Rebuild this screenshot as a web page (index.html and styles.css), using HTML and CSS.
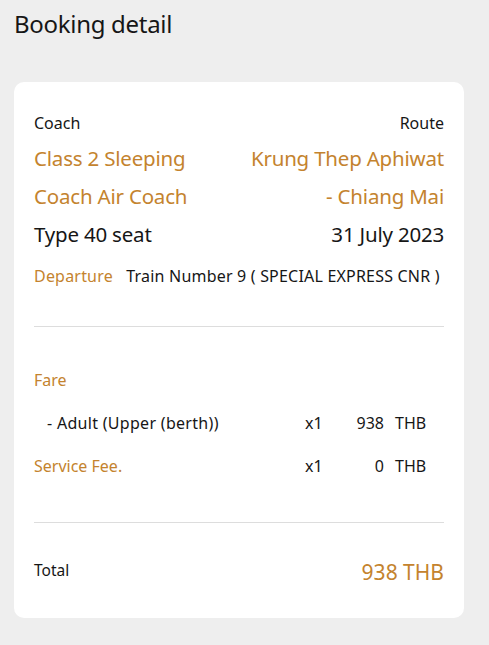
FILE: index.html
```html
<!DOCTYPE html>
<html lang="en">
<head>
    <meta charset="UTF-8">
    <meta name="viewport" content="width=device-width, initial-scale=1.0">
    <title>Booking detail</title>
    <link rel="stylesheet" href="styles.css">
</head>
<body>
    <h1 class="page-title">Booking detail</h1>

    <div class="card">
        <!-- Coach / Route -->
        <div class="trip">
            <div class="trip-col">
                <div class="label">Coach</div>
                <div class="big orange">Class 2 Sleeping</div>
                <div class="big orange">Coach Air Coach</div>
                <div class="big">Type 40 seat</div>
            </div>
            <div class="trip-col right">
                <div class="label">Route</div>
                <div class="big orange">Krung Thep Aphiwat</div>
                <div class="big orange">- Chiang Mai</div>
                <div class="big">31 July 2023</div>
            </div>
        </div>

        <div class="departure">
            <span class="orange">Departure</span>
            <span>Train Number 9 ( SPECIAL EXPRESS CNR )</span>
        </div>

        <hr class="divider">

        <!-- Fare -->
        <div class="fare-title orange">Fare</div>
        <div class="fare-row">
            <div class="fare-name indent">- Adult (Upper (berth))</div>
            <div class="fare-qty">x1</div>
            <div class="fare-amount">938</div>
            <div class="fare-cur">THB</div>
        </div>
        <div class="fare-row">
            <div class="fare-name orange">Service Fee.</div>
            <div class="fare-qty">x1</div>
            <div class="fare-amount">0</div>
            <div class="fare-cur">THB</div>
        </div>

        <hr class="divider second">

        <div class="total">
            <span>Total</span>
            <span class="total-price orange">938 THB</span>
        </div>
    </div>
</body>
</html>
```

FILE: styles.css
```css
body {
    margin: 0;
    background: #eeeeee;
    color: #161616;
    font-family: "Noto Sans", "Open Sans", sans-serif;
}

.page-title {
    margin: 8px 14px 0;
    font-size: 24px;
    font-weight: 400;
    line-height: 32px;
    letter-spacing: -0.3px;
}

.card {
    margin: 42px 25px 0 14px;
    background: #fff;
    border-radius: 10px;
    padding: 29px 20px 32px;
}

.orange {
    color: #c4832e;
}

.trip {
    display: flex;
    justify-content: space-between;
}

.trip-col.right {
    text-align: right;
}

.label {
    font-size: 16px;
    line-height: 24px;
    margin-bottom: 4px;
}

.big {
    font-size: 20.5px;
    line-height: 38px;
    letter-spacing: -0.2px;
}

.departure {
    margin-top: 11px;
    font-size: 16px;
    line-height: 24px;
    letter-spacing: 0.2px;
}

.departure span:first-child {
    margin-right: 9px;
}

.divider {
    border: none;
    border-top: 1px solid #dddddd;
    margin: 38px 0 0;
}

.divider.second {
    margin-top: 44px;
}

.fare-title {
    margin-top: 41px;
    font-size: 16px;
    line-height: 24px;
}

.fare-row {
    display: grid;
    grid-template-columns: 1fr 40px 39px 60px;
    margin-top: 19px;
    font-size: 16px;
    line-height: 24px;
}

.fare-name.indent {
    padding-left: 13px;
    letter-spacing: 0.3px;
}

.fare-amount {
    text-align: right;
}

.fare-cur {
    padding-left: 11px;
}

.total {
    display: flex;
    justify-content: space-between;
    align-items: center;
    margin-top: 35px;
    font-size: 15.5px;
}

.total span:first-child {
    margin-top: -4px;
}

.total-price {
    font-size: 21px;
    line-height: 28px;
}
```
